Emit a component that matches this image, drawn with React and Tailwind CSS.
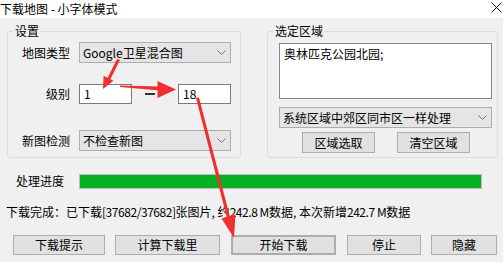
import React from "react";

// 下拉框右侧的小箭头
function Chevron() {
    return (
        <svg width="9" height="5" viewBox="0 0 9 5" className="shrink-0">
            <path d="M0.5 0.5 L4.5 4.5 L8.5 0.5" fill="none" stroke="#6d6d6d" strokeWidth="1" />
        </svg>
    );
}

function Combo({ text, className = "" }) {
    return (
        <div className={`flex h-[21px] items-center justify-between border border-[#adadad] bg-[#e5e5e5] pl-[3px] pr-[4px] ${className}`}>
            <span className="whitespace-nowrap">{text}</span>
            <Chevron />
        </div>
    );
}

function Btn({ children, className = "" }) {
    return (
        <div className={`flex items-center justify-center border border-[#adadad] bg-[#e1e1e1] ${className}`}>
            {children}
        </div>
    );
}

function Group({ title, className = "", children }) {
    return (
        <div className={`relative h-[127px] rounded-[3px] border border-[#dcdcdc] ${className}`}>
            <span className="absolute -top-[9px] left-[5px] bg-[#f0f0f0] px-[2px]">{title}</span>
            {children}
        </div>
    );
}

// 数字部分比中文窄一点
const Num = ({ children }) => <span className="tracking-[-0.45px]">{children}</span>;

export default function App() {
    return (
        <div className="relative h-[262px] w-[503px] overflow-hidden bg-[#f0f0f0] text-[12px] leading-[16px] text-black font-['Noto_Sans_CJK_SC','Liberation_Sans',sans-serif]">
            {/* 标题栏 */}
            <div className="flex h-[18px] items-center justify-between bg-white">
                <span className="whitespace-nowrap">下载地图 - 小字体模式</span>
                <svg width="11" height="11" viewBox="0 0 11 11" className="mr-[1px] -mt-[3px]">
                    <path d="M0.5 0.5 L10.5 10.5 M10.5 0.5 L0.5 10.5" stroke="#111" strokeWidth="1" />
                </svg>
            </div>

            <div className="mt-[13px] flex items-start">
                {/* 设置 */}
                <Group title="设置" className="ml-[7px] w-[234px]">
                    <div className="mt-[10px] flex items-center">
                        <div className="w-[62px] text-right">地图类型</div>
                        <Combo text="Google卫星混合图" className="ml-[9px] w-[152px]" />
                    </div>
                    <div className="mt-[21px] flex h-[20px] items-center">
                        <div className="w-[62px] text-right">级别</div>
                        <div className="ml-[9px] flex h-[20px] w-[53px] items-center border border-[#7a7a7a] bg-white pl-[4px]">1</div>
                        <div className="w-[46px]">
                            <div className="ml-[13px] h-[2px] w-[10px] bg-[#333]"></div>
                        </div>
                        <div className="flex h-[20px] w-[53px] items-center border border-[#7a7a7a] bg-white pl-[4px]">18</div>
                    </div>
                    <div className="mt-[26px] flex items-center">
                        <div className="w-[62px] text-right">新图检测</div>
                        <Combo text="不检查新图" className="ml-[9px] w-[152px]" />
                    </div>
                </Group>

                {/* 选定区域 */}
                <Group title="选定区域" className="ml-[26px] w-[231px]">
                    <div className="ml-[11px] mt-[11px] h-[56px] w-[213px] border border-[#828790] bg-white pl-[4px] pt-[2px]">
                        奥林匹克公园北园;
                    </div>
                    <Combo text="系统区域中郊区同市区一样处理" className="ml-[11px] mt-[8px] w-[213px]" />
                    <div className="mt-[4px] flex">
                        <Btn className="ml-[34px] h-[21px] w-[73px]">区域选取</Btn>
                        <Btn className="ml-[22px] h-[21px] w-[73px]">清空区域</Btn>
                    </div>
                </Group>
            </div>

            {/* 处理进度 */}
            <div className="mt-[15px] flex items-center">
                <div className="ml-[16px] w-[63px]">处理进度</div>
                <div className="h-[15px] w-[403px] border border-[#bcbcbc] bg-[#06b025]"></div>
            </div>

            <div className="ml-[6px] mt-[15px] whitespace-nowrap">
                下载完成：已下载<Num>[37682/37682]</Num>张图片, 约<Num>242.8 M</Num>数据, 本次新增<Num>242.7 M</Num>数据
            </div>

            {/* 底部按钮 */}
            <div className="mt-[15px] flex">
                <Btn className="ml-[13px] h-[20px] w-[92px]">下载提示</Btn>
                <Btn className="ml-[10px] h-[20px] w-[105px]">计算下载里</Btn>
                <Btn className="ml-[11px] h-[20px] w-[105px] border-2 border-[#0078d7]">开始下载</Btn>
                <Btn className="ml-[11px] h-[20px] w-[74px]">停止</Btn>
                <Btn className="ml-[10px] h-[20px] w-[66px]">隐藏</Btn>
            </div>

            {/* 红色标注箭头 */}
            <svg className="pointer-events-none absolute inset-0" width="503" height="262" viewBox="0 0 503 262">
                <g fill="#ef3030" stroke="none">
                    <polygon points="117,59 120,60 110,80 107,79" />
                    <polygon points="103,89 113.4,80.8 103.6,75.8" />
                    <polygon points="120,85.5 120,87 160,90.5 160,86.5" />
                    <polygon points="176,89.5 157.5,81 157.5,98" />
                    <polygon points="196,98 199,97.5 230,217 227,218" />
                    <polygon points="234,238 235.5,214.5 221.5,218.5" />
                </g>
            </svg>
        </div>
    );
}
